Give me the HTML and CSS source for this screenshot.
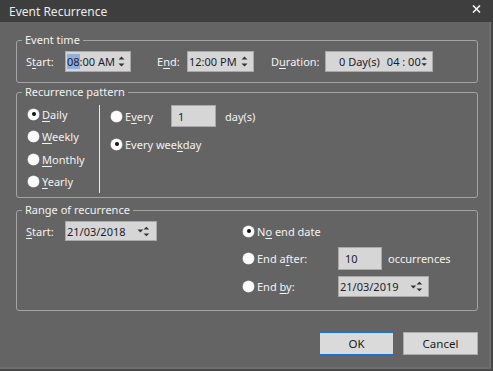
FILE: index.html
```html
<!DOCTYPE html>
<html>
<head>
<meta charset="utf-8">
<link rel="stylesheet" href="styles.css">
</head>
<body>
<div class="dialog">
  <div class="titlebar">
    <span class="title">Event Recurrence</span>
    <svg class="close" width="9" height="8" viewBox="0 0 9 8"><path d="M1 0.5 L8 7.5 M8 0.5 L1 7.5" stroke="#f4f4f4" stroke-width="1.6"/></svg>
  </div>
  <div class="content">
    <fieldset class="group g-time">
      <legend>Event time</legend>
      <div class="time-row">
        <span class="lbl w-start">S<u>t</u>art:</span>
        <div class="box b-start"><span class="txt"><span class="sel">08</span>:00 AM</span><svg class="spin" width="7" height="13" viewBox="0 0 7 13"><path d="M3.5 1.5 L6.5 4.5 H0.5 Z M3.5 11.5 L6.5 8.5 H0.5 Z" fill="#333"/></svg></div>
        <span class="lbl w-end">E<u>n</u>d:</span>
        <div class="box b-end"><span class="txt">12:00 PM</span><svg class="spin" width="7" height="13" viewBox="0 0 7 13"><path d="M3.5 1.5 L6.5 4.5 H0.5 Z M3.5 11.5 L6.5 8.5 H0.5 Z" fill="#333"/></svg></div>
        <span class="lbl w-dur">D<u>u</u>ration:</span>
        <div class="box b-dur"><span class="txt dur"><span>0 Day(s)</span><span>04 : 00</span></span><svg class="spin" width="7" height="13" viewBox="0 0 7 13"><path d="M3.5 1.5 L6.5 4.5 H0.5 Z M3.5 11.5 L6.5 8.5 H0.5 Z" fill="#333"/></svg></div>
      </div>
    </fieldset>

    <fieldset class="group g-pattern">
      <legend>Recurrence pattern</legend>
      <div class="pattern">
        <div class="freq">
          <span class="radio on"><i class="dot"></i><span><u>D</u>aily</span></span>
          <span class="radio"><i class="dot"></i><span><u>W</u>eekly</span></span>
          <span class="radio"><i class="dot"></i><span><u>M</u>onthly</span></span>
          <span class="radio"><i class="dot"></i><span><u>Y</u>early</span></span>
        </div>
        <div class="sep"></div>
        <div class="daily">
          <div class="row-every">
            <span class="radio every"><i class="dot"></i><span>E<u>v</u>ery</span></span>
            <div class="box num b-days"><span class="txt">1</span></div>
            <span class="unit">day(s)</span>
          </div>
          <div class="row-weekday">
            <span class="radio on"><i class="dot"></i><span>Every wee<u>k</u>day</span></span>
          </div>
        </div>
      </div>
    </fieldset>

    <fieldset class="group g-range">
      <legend>Range of recurrence</legend>
      <div class="range">
        <div class="range-start">
          <span class="lbl w-start"><u>S</u>tart:</span>
          <div class="box date b-rstart"><span class="txt">21/03/2018</span><svg class="drop" width="7" height="4" viewBox="0 0 7 4"><path d="M0.5 0.5 H6.5 L3.5 3.5 Z" fill="#333"/></svg><svg class="spin" width="7" height="13" viewBox="0 0 7 13"><path d="M3.5 1.5 L6.5 4.5 H0.5 Z M3.5 11.5 L6.5 8.5 H0.5 Z" fill="#333"/></svg></div>
        </div>
        <div class="range-end">
          <div class="r-row r1"><span class="radio on"><i class="dot"></i><span>N<u>o</u> end date</span></span></div>
          <div class="r-row r2">
            <span class="radio endlbl"><i class="dot"></i><span>End a<u>f</u>ter:</span></span>
            <div class="box num b-occ"><span class="txt">10</span></div>
            <span class="unit occ">occurrences</span>
          </div>
          <div class="r-row r3">
            <span class="radio endlbl"><i class="dot"></i><span>End <u>b</u>y:</span></span>
            <div class="box date b-endby"><span class="txt">21/03/2019</span><svg class="drop" width="7" height="4" viewBox="0 0 7 4"><path d="M0.5 0.5 H6.5 L3.5 3.5 Z" fill="#333"/></svg><svg class="spin" width="7" height="13" viewBox="0 0 7 13"><path d="M3.5 1.5 L6.5 4.5 H0.5 Z M3.5 11.5 L6.5 8.5 H0.5 Z" fill="#333"/></svg></div>
          </div>
        </div>
      </div>
    </fieldset>

    <div class="buttons">
      <button class="btn ok">OK</button>
      <button class="btn">Cancel</button>
    </div>
  </div>
</div>
</body>
</html>
```

FILE: styles.css
```css
* { box-sizing: border-box; }
html, body { margin: 0; padding: 0; background: #646464; }
body {
  font-family: "Noto Sans", "Open Sans", sans-serif;
  font-size: 11px;
  color: #f2f2f2;
}
u { text-decoration-thickness: 1px; text-underline-offset: 2px; }

.dialog {
  width: 493px;
  height: 371px;
  background: #646464;
  display: flex;
  flex-direction: column;
  box-shadow: inset -2px -2px 0 #484848, inset -4px -4px 0 #6e6e6e;
}

.titlebar {
  height: 22px;
  flex: none;
  background: #3e3e3e;
  display: flex;
  align-items: center;
  justify-content: space-between;
  padding: 0 12px 0 9px;
  font-size: 12px;
  color: #ececec;
}
.titlebar .close { display: block; margin-top: -4px; }

.content {
  padding: 11px 15px 0 16px;
  display: flex;
  flex-direction: column;
}

.group {
  margin: 0;
  padding: 0;
  border: 1px solid #a4a4a4;
  border-radius: 3px;
  min-width: 0;
}
.group legend {
  padding: 0 3px;
  margin-left: 5px;
  line-height: 14px;
  font-size: 11px;
  color: #f2f2f2;
}

.lbl { flex: none; }
.box {
  flex: none;
  display: flex;
  align-items: center;
  background: #d6d6d6;
  border: 1px solid #a9a9a9;
  color: #1c1c2a;
  padding-left: 1px;
}
.box .txt { white-space: nowrap; }
.box .sel { background: #8db0de; }
.box .spin { margin-left: auto; margin-right: 5px; display: block; }
.box .drop { display: block; }

/* Event time */
.time-row {
  display: flex;
  align-items: center;
  padding: 4px 0 10px 9px;
}
.w-start { width: 39px; }
.w-end { width: 30px; margin-left: 26px; }
.w-dur { width: 54px; margin-left: 17px; }
.b-start { width: 66px; height: 21px; }
.b-end { width: 67px; height: 21px; }
.b-dur { width: 108px; height: 21px; padding-left: 13px; }
.dur { display: flex; gap: 7px; }

/* Pattern */
.g-pattern { margin-top: 2px; }
.pattern {
  display: flex;
  padding: 6px 0 4px 0;
}
.freq {
  width: 82px;
  padding-left: 11px;
  display: flex;
  flex-direction: column;
  gap: 4.67px;
}
.freq .radio { height: 18px; }
.sep { width: 1px; height: 88px; background: #e8e8e8; flex: none; }
.daily { padding-left: 11px; display: flex; flex-direction: column; }
.row-every { display: flex; align-items: center; height: 22px; }
.every { width: 60px; }
.b-days { width: 45px; height: 22px; padding-left: 6px; }
.unit { margin-left: 9px; }
.row-weekday { margin-top: 8px; height: 18px; display: flex; align-items: center; }

.radio {
  display: flex;
  align-items: center;
  gap: 3px;
  white-space: nowrap;
  flex: none;
}
.radio .dot {
  width: 11px;
  height: 11px;
  border-radius: 50%;
  background: #fbfbfb;
  box-shadow: 0 0 0 0.5px #d0d0d0;
  flex: none;
  position: relative;
}
.radio.on .dot::after {
  content: "";
  position: absolute;
  left: 3.5px;
  top: 3.5px;
  width: 4px;
  height: 4px;
  border-radius: 50%;
  background: #111;
}

/* Range */
.g-range { margin-top: 5px; }
.range {
  display: flex;
  padding: 4px 0 13px 0;
}
.range-start {
  display: flex;
  align-items: center;
  height: 20px;
  padding-left: 9px;
}
.date { padding-left: 1px; }
.b-rstart { width: 92px; height: 20px; }
.b-rstart .drop { margin-left: 11px; }
.b-rstart .spin { margin-left: auto; margin-right: 6px; }
.range-end { margin-left: 86px; display: flex; flex-direction: column; }
.r-row { display: flex; align-items: center; }
.r1 { height: 20px; }
.r2 { height: 23px; margin-top: 6px; }
.r3 { height: 21px; margin-top: 6px; }
.endlbl { width: 95px; }
.b-occ { width: 44px; height: 23px; padding-left: 6px; }
.occ { margin-left: 6px; }
.b-endby { width: 91px; height: 21px; }
.b-endby .drop { margin-left: 11px; }
.b-endby .spin { margin-left: auto; margin-right: 5px; }

/* Buttons */
.buttons {
  margin-top: 21px;
  display: flex;
  justify-content: flex-end;
  gap: 9px;
}
.btn {
  width: 75px;
  height: 23px;
  margin: 0;
  padding: 0;
  background: #dadada;
  border: 1px solid #adadad;
  border-radius: 0;
  font-family: "Noto Sans", "Open Sans", sans-serif;
  font-size: 11.5px;
  color: #1c1c1c;
}
.btn.ok { border-color: #1f72d0; }
```
